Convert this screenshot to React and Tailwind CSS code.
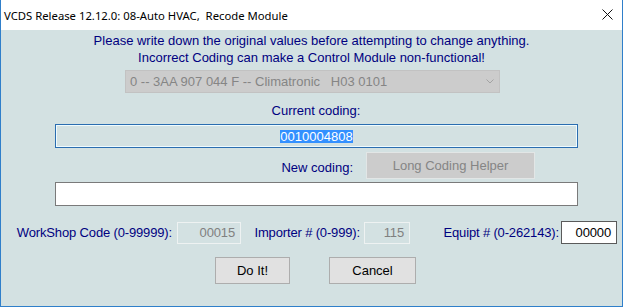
const label = 'text-[#000080]'

function App() {
  return (
    <div className="w-[623px] h-[307px] flex flex-col border-x border-b border-[#2f7fca] bg-white font-['Liberation_Sans',Arial,sans-serif] text-[13px] leading-[17px]">
      {/* title bar */}
      <div className="h-[30px] shrink-0 flex items-center justify-between bg-white pl-[3px] pr-[9px]">
        <span className="font-['Noto_Sans',sans-serif] text-[11.3px] text-black">VCDS Release 12.12.0: 08-Auto HVAC,&nbsp; Recode Module</span>
        <svg width="11" height="11" viewBox="0 0 11 11" className="mb-[1px]">
          <path d="M0.5 0.5 L10.5 10.5 M10.5 0.5 L0.5 10.5" stroke="#111" strokeWidth="1" />
        </svg>
      </div>

      <div className="flex-1 bg-[#d3e1e2] pt-[2px]">
        <p className={`text-center ${label}`}>Please write down the original values before attempting to change anything.</p>
        <p className={`text-center ${label}`}>Incorrect Coding can make a Control Module non-functional!</p>

        <div className="ml-[124px] mt-[4px] w-[375px] h-[23px] flex items-center justify-between bg-[#cccccc] border border-[#c2c2c2] pl-[4px] pr-[5px] text-[#858585]">
          <span className="whitespace-pre">0 -- 3AA 907 044 F -- Climatronic   H03 0101</span>
          <svg width="8" height="5" viewBox="0 0 8 5">
            <path d="M0.5 0.5 L4 4 L7.5 0.5" fill="none" stroke="#a3a3a3" strokeWidth="1" />
          </svg>
        </div>

        <p className={`ml-[54px] mt-[9px] w-[522px] text-center ${label}`}>Current coding:</p>
        <div className="ml-[54px] mt-[5px] w-[523px] h-[24px] flex items-center justify-center border border-[#2a6db0] shadow-[inset_0_0_0_1px_#eefbff]">
          <span className="bg-[#3390ff] text-white leading-[13px] h-[13px]">0010004808</span>
        </div>

        <div className="mt-[4px] flex items-start">
          <div className={`w-[352px] mt-[7px] text-right ${label}`}>New coding:</div>
          <div className="ml-[13px] w-[169px] h-[27px] flex items-center justify-center bg-[#cccccc] border border-[#e2e6e6] text-[#858585]">Long Coding Helper</div>
        </div>
        <div className="ml-[54px] mt-[3px] w-[523px] h-[24px] bg-white border border-[#7a7a7a]" />

        <div className="mt-[15px] flex items-center tracking-[-0.15px]">
          <div className={`w-[171px] text-right ${label}`}>WorkShop Code (0-99999):</div>
          <div className="ml-[5px] w-[64px] h-[22px] flex items-center justify-end pr-[5px] border border-[#eef2f2] text-[#808080]">00015</div>
          <div className={`w-[119px] text-right ${label}`}>Importer # (0-999):</div>
          <div className="ml-[4px] w-[46px] h-[22px] flex items-center justify-end pr-[5px] border border-[#eef2f2] text-[#808080]">115</div>
          <div className={`w-[149px] text-right ${label}`}>Equipt # (0-262143):</div>
          <div className="ml-[2px] w-[56px] h-[23px] flex items-center justify-end pr-[5px] bg-white border border-[#5a5a5a] text-black">00000</div>
        </div>

        <div className="mt-[13px] flex">
          <button className="ml-[214px] w-[75px] h-[27px] bg-[#e1e1e1] border border-[#adadad] text-black">Do It!</button>
          <button className="ml-[39px] w-[87px] h-[27px] bg-[#e1e1e1] border border-[#adadad] text-black">Cancel</button>
        </div>
      </div>
    </div>
  )
}

export default App
